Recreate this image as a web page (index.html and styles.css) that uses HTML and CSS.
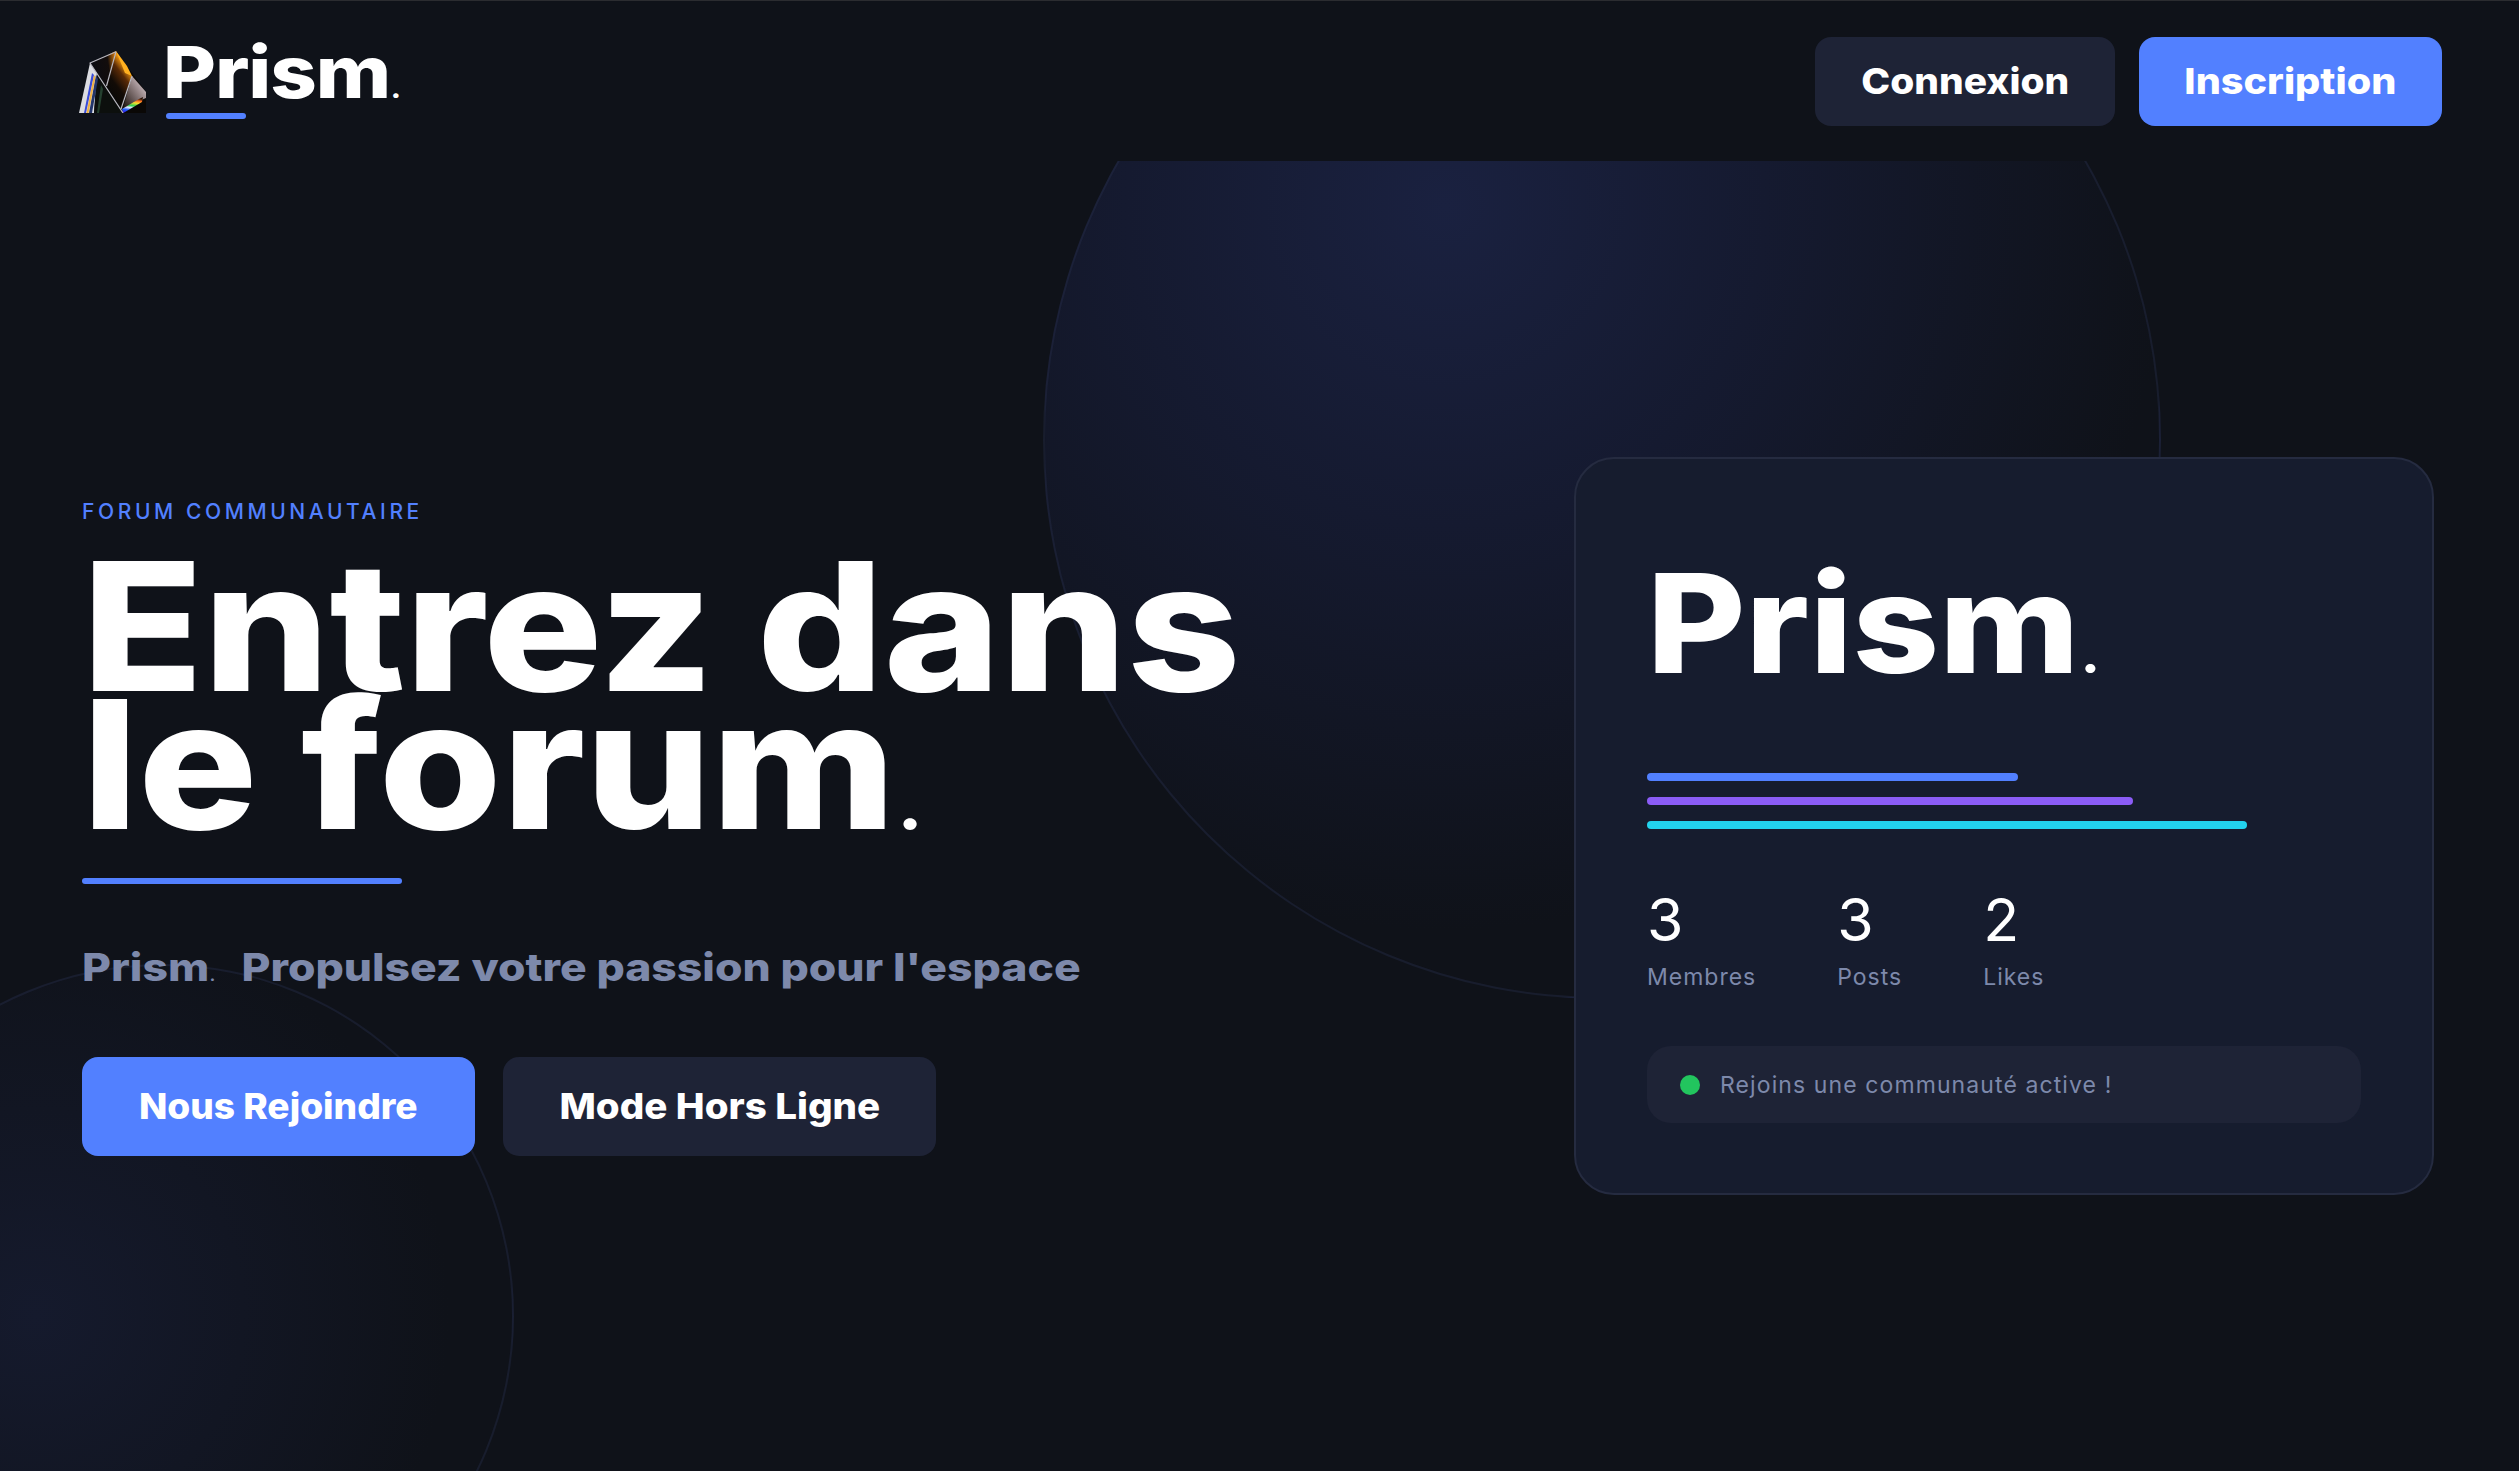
FILE: index.html
```html
<!DOCTYPE html>
<html lang="fr">
<head>
<meta charset="utf-8">
<title>Prism.</title>
<link rel="stylesheet" href="styles.css">
</head>
<body>
<div class="page">
  <header class="topbar">
    <a class="brand" href="#">
      <svg class="brand-mark" viewBox="0 0 67 62" aria-hidden="true">
        <defs>
          <linearGradient id="topface" x1="0" y1="0.5" x2="1" y2="0.3">
            <stop offset="0" stop-color="#0a0b12"/><stop offset="0.7" stop-color="#130d0c"/><stop offset="1" stop-color="#d97a0c"/>
          </linearGradient>
          <linearGradient id="glow" x1="0.75" y1="0" x2="0.25" y2="0.85">
            <stop offset="0" stop-color="#fff0c4"/><stop offset="0.2" stop-color="#ffa010"/><stop offset="0.42" stop-color="#5a2a06"/><stop offset="0.7" stop-color="#120b06"/><stop offset="1" stop-color="#080807"/>
          </linearGradient>
          <linearGradient id="sheen" x1="1" y1="0" x2="0" y2="1">
            <stop offset="0" stop-color="#efe0e8"/><stop offset="0.45" stop-color="#8f7f80"/><stop offset="1" stop-color="#1a100a"/>
          </linearGradient>
          <linearGradient id="rainbow" x1="0.1" y1="1" x2="0.3" y2="0">
            <stop offset="0" stop-color="#3a10e0"/><stop offset="0.22" stop-color="#2060ff"/><stop offset="0.38" stop-color="#e8e8ff"/><stop offset="0.52" stop-color="#30d050"/><stop offset="0.7" stop-color="#f4e030"/><stop offset="0.85" stop-color="#ff7020"/><stop offset="1" stop-color="#2a1408"/>
          </linearGradient>
        </defs>
        <polygon points="11,12 0,62 15,62 18,22" fill="#dcdde2"/>
        <polygon points="18,22 15,62 44,62" fill="#0c0f0d"/>
        <polygon points="17,24 10,62 13,62 19,28" fill="#23356a"/>
        <polygon points="13,22 5,62 7,62 15,24" fill="#3a4cd8"/>
        <polygon points="15,24 7.500,62 9.500,62 16.500,26" fill="#f0b040"/>
        <polygon points="22,34 18,62 20,62 24,38" fill="#24402f"/>
        <polygon points="11,12 37,0 27,35" fill="url(#topface)"/>
        <polygon points="37,0 53,25 42,58 27,35" fill="url(#glow)"/>
        <polygon points="37,0 67,41 67,62 44,62 42,58 53,25" fill="#0a0806"/>
        <polygon points="37,0 48,15 53,25 46,22" fill="#ffb020"/>
        <polygon points="53,25 67,41 67,47 44,57" fill="url(#sheen)"/>
        <polygon points="43,58 60,48 64,46 63,51 46,61 44,62" fill="url(#rainbow)"/>
        <g fill="none" stroke="#b9b8c0" stroke-width="1.200" stroke-linejoin="round">
          <polyline points="37,0.700 11,12 44,62"/>
          <line x1="37" y1="0.700" x2="27.500" y2="35"/>
          <line x1="53" y1="25" x2="42" y2="58"/>
        </g>
      </svg>
      <span class="wordmark">
        <span class="wordmark-text"><span class="wide">Prism<span class="dot">.</span></span></span>
        <span class="wordmark-rule"></span>
      </span>
    </a>
    <nav class="top-actions">
      <a class="btn btn-dark btn-login" href="#"><span class="wide">Connexion</span></a>
      <a class="btn btn-blue btn-signup" href="#"><span class="wide">Inscription</span></a>
    </nav>
  </header>

  <main class="hero">
    <div class="orb orb-large"></div>
    <div class="orb orb-small"></div>

    <section class="pitch">
      <p class="eyebrow">FORUM COMMUNAUTAIRE</p>
      <h1 class="headline"><span class="wide">Entrez dans<br>le forum<span class="dot">.</span></span></h1>
      <div class="headline-rule"></div>
      <p class="tagline"><span class="wide"><span class="tagline-brand">Prism<span class="dot">.</span></span> Propulsez votre passion pour l'espace</span></p>
      <div class="cta-row">
        <a class="btn btn-blue btn-join" href="#"><span class="wide">Nous Rejoindre</span></a>
        <a class="btn btn-dark btn-offline" href="#"><span class="wide">Mode Hors Ligne</span></a>
      </div>
    </section>

    <aside class="card">
      <div class="card-title"><span class="wide">Prism<span class="dot">.</span></span></div>
      <div class="bars">
        <div class="bar bar-blue"></div>
        <div class="bar bar-violet"></div>
        <div class="bar bar-cyan"></div>
      </div>
      <div class="stats">
        <div class="stat"><div class="stat-num">3</div><div class="stat-label">Membres</div></div>
        <div class="stat"><div class="stat-num">3</div><div class="stat-label">Posts</div></div>
        <div class="stat"><div class="stat-num">2</div><div class="stat-label">Likes</div></div>
      </div>
      <div class="status"><span class="status-dot"></span><span>Rejoins une communauté active !</span></div>
    </aside>
  </main>
</div>
</body>
</html>
```
FILE: styles.css
```css
* { box-sizing: border-box; }
html, body { margin: 0; padding: 0; height: 100%; }
body {
  background: #0f1219;
  color: #fff;
  font-family: Inter, "Liberation Sans", sans-serif;
  overflow: hidden;
}
a { color: inherit; text-decoration: none; }
p, h1 { margin: 0; }

/* The display face in the design is wider than any installed family */
.wide { display: inline-block; transform-origin: left center; white-space: nowrap; }

.page {
  height: 1471px;
  display: flex;
  flex-direction: column;
  border-top: 1px solid #2b2c30;
}

.topbar {
  height: 160px;
  flex: none;
  display: flex;
  align-items: center;
  justify-content: space-between;
  padding: 0 77px 0 79px;
}
.brand { display: flex; align-items: flex-start; gap: 20px; }
.brand-mark { width: 67px; height: 62px; display: block; margin-top: 8px; }
.wordmark { display: flex; flex-direction: column; }
.wordmark-text {
  margin-left: -3px;
  font-size: 72px;
  line-height: 58px;
  font-weight: 800;
  letter-spacing: -1px;
}
.wordmark-text .wide { transform: scaleX(1.13); }
.wordmark-rule {
  width: 80px;
  height: 6px;
  margin-top: 12px;
  border-radius: 3px;
  background: #5280ff;
}
.dot { font-weight: 400; font-size: 0.5em; line-height: 0; letter-spacing: 0; }

.top-actions { display: flex; gap: 24px; }
.btn {
  display: flex;
  align-items: center;
  justify-content: center;
  border-radius: 16px;
  font-weight: 800;
  color: #fff;
}
.btn .wide { transform-origin: center; }
.btn-dark { background: #1e2336; }
.btn-blue { background: #5280ff; }
.btn-login, .btn-signup { height: 89px; font-size: 36px; }
.btn-login { width: 300px; }
.btn-login .wide { transform: scaleX(1.08); }
.btn-signup { width: 303px; }
.btn-signup .wide { transform: scaleX(1.1); }
.btn-join, .btn-offline { height: 99px; font-size: 36px; }
.btn-join { width: 393px; }
.btn-join .wide { transform: scaleX(1.03); }
.btn-offline { width: 433px; }
.btn-offline .wide { transform: scaleX(1.07); }

.hero {
  position: relative;
  flex: 1;
  overflow: hidden;
  display: flex;
  align-items: center;
  justify-content: space-between;
  padding: 20px 85px 0 82px;
}
.orb { position: absolute; border-radius: 50%; border: 2px solid rgba(38, 46, 74, .42); }
.orb-large {
  left: 1043px;
  top: -280px;
  width: 1118px;
  height: 1118px;
  background: radial-gradient(circle at 36% 29%, #1a2140 0%, #151a30 30%, #0f1219 68%);
}
.orb-small {
  left: -190px;
  top: 803px;
  width: 704px;
  height: 704px;
  background: radial-gradient(circle at 32% 50%, #151a2d 0%, #0f1219 70%);
}

.pitch { position: relative; display: flex; flex-direction: column; align-items: flex-start; }
.eyebrow {
  font-size: 21px;
  line-height: 30px;
  letter-spacing: 3.6px;
  color: #5280ff;
  font-weight: 500;
}
.headline {
  margin-top: 30px;
  font-size: 179px;
  line-height: 138px;
  font-weight: 800;
  white-space: nowrap;
}
.headline .wide { transform: scaleX(1.11); }
.headline-rule {
  width: 320px;
  height: 6px;
  margin-top: 45px;
  border-radius: 3px;
  background: #5280ff;
}
.tagline {
  margin-top: 58px;
  font-size: 38.5px;
  line-height: 50px;
  font-weight: 800;
  color: #7d89ab;
  white-space: nowrap;
}
.tagline .wide { transform: scaleX(1.155); }
.tagline-brand { margin-right: 14px; }
.cta-row { display: flex; gap: 28px; margin-top: 65px; }

.card {
  position: relative;
  width: 860px;
  height: 738px;
  padding: 72px 71px 71px;
  border: 2px solid #252b40;
  border-radius: 40px;
  background: #161c2e;
}
.card-title {
  font-size: 137.5px;
  line-height: 184px;
  font-weight: 800;
}
.card-title .wide { transform: scaleX(1.1); }
.bars { margin-top: 58px; display: flex; flex-direction: column; gap: 16px; }
.bar { height: 8px; border-radius: 4px; }
.bar-blue { width: 52%; background: #5280ff; }
.bar-violet { width: 68%; background: #8b5cf6; }
.bar-cyan { width: 84%; background: #22d3ee; }

.stats { display: flex; gap: 81px; margin-top: 56px; }
.stat-num { font-size: 59px; line-height: 70px; font-weight: 400; }
.stat-label {
  margin-top: 7px;
  font-size: 23px;
  line-height: 30px;
  letter-spacing: 1px;
  color: #7d89ab;
}
.status {
  margin-top: 54px;
  height: 77px;
  display: flex;
  align-items: center;
  gap: 20px;
  padding-left: 33px;
  border-radius: 24px;
  background: #1e2336;
  font-size: 23px;
  letter-spacing: 1.1px;
  color: #7d89ab;
}
.status-dot { width: 20px; height: 20px; border-radius: 50%; background: #22c55e; }
```
